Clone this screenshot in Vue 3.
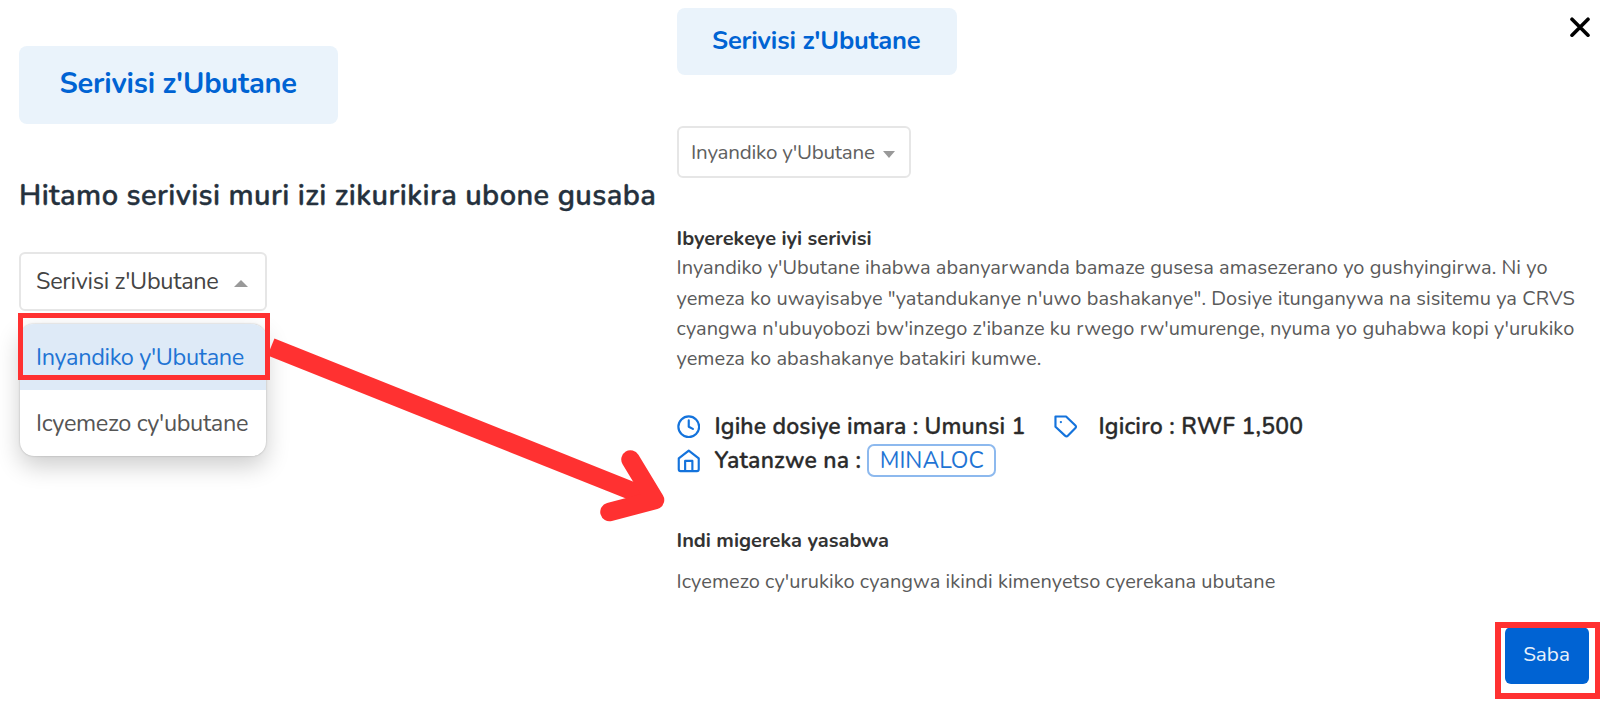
<template>
  <div class="page">
    <section class="left">
      <div class="badge badge-lg">Serivisi z'Ubutane</div>
      <h2 class="heading">Hitamo serivisi muri izi zikurikira ubone gusaba</h2>
      <div class="dropdown">
        <div class="select select-lg">
          <span>Serivisi z'Ubutane</span>
          <i class="caret up"></i>
        </div>
        <ul class="menu">
          <li
              v-for="option in options"
              :key="option"
              class="option"
              :class="{ active: option === selected }"
          >{{ option }}</li>
        </ul>
        <div class="marker marker-option"></div>
      </div>
    </section>

    <section class="right">
      <svg class="close" viewBox="0 0 20 20"><path d="M2 2.2L18 18.2M18 2.2L2 18.2" /></svg>
      <div class="badge badge-sm">Serivisi z'Ubutane</div>
      <div class="select select-sm">
        <span>{{ selected }}</span>
        <i class="caret down"></i>
      </div>
      <h4 class="title">Ibyerekeye iyi serivisi</h4>
      <p class="desc">
        <span v-for="line in lines" :key="line">{{ line }}</span>
      </p>
      <div class="meta">
        <div class="meta-row">
          <svg class="icon" viewBox="0 0 24 24">
            <circle cx="12" cy="12" r="10.6" />
            <path d="M12 5.5V12l4.2 2.2" />
          </svg>
          <span>Igihe dosiye imara : Umunsi 1</span>
          <svg class="icon tag" viewBox="0 0 24 24">
            <path d="M1.5 1.5h10.8l9.6 9.2a1.8 1.8 0 0 1 0 2.6l-7.8 8a1.8 1.8 0 0 1-2.6 0L1.5 12z" />
            <path d="M7 7.2h.1" />
          </svg>
          <span class="price">Igiciro : RWF 1,500</span>
        </div>
        <div class="meta-row">
          <svg class="icon" viewBox="0 0 24 24">
            <path d="M1.8 9.6L12 1.6l10.2 8v11.2a1.8 1.8 0 0 1-1.8 1.8H3.6a1.8 1.8 0 0 1-1.8-1.8z" />
            <path d="M8.3 22.4V12.2h7.4v10.2" />
          </svg>
          <span class="issuer">Yatanzwe na :</span>
          <span class="chip">MINALOC</span>
        </div>
      </div>
      <h4 class="title title-attachments">Indi migereka yasabwa</h4>
      <p class="attachment">Icyemezo cy'urukiko cyangwa ikindi kimenyetso cyerekana ubutane</p>
      <div class="actions">
        <button class="submit">Saba</button>
        <div class="marker marker-submit"></div>
      </div>
    </section>

    <!-- arrow from the chosen option to the detail panel -->
    <svg class="arrow" viewBox="0 0 1600 705">
      <path d="M271 347L652 499" />
      <path class="head" d="M630.5 459.5L655 500L609.5 512" />
    </svg>
  </div>
</template>

<script setup>
import { ref } from 'vue';

const options = ["Inyandiko y'Ubutane", "Icyemezo cy'ubutane"];
const selected = ref(options[0]);

const lines = [
  "Inyandiko y'Ubutane ihabwa abanyarwanda bamaze gusesa amasezerano yo gushyingirwa. Ni yo",
  'yemeza ko uwayisabye "yatandukanye n\'uwo bashakanye". Dosiye itunganywa na sisitemu ya CRVS',
  "cyangwa n'ubuyobozi bw'inzego z'ibanze ku rwego rw'umurenge, nyuma yo guhabwa kopi y'urukiko",
  'yemeza ko abashakanye batakiri kumwe.'
];
</script>

<style>
body {
  background: #fff;
}
</style>

<style scoped>
.page {
  position: relative;
  display: flex;
  width: 1600px;
  height: 705px;
  overflow: hidden;
  background: #fff;
  font-family: Nunito, "Nunito Sans", Lato, sans-serif;
  white-space: nowrap;
}

h2, h4, p, ul {
  margin: 0;
  padding: 0;
}

.left {
  width: 658px;
  box-sizing: border-box;
  padding: 46px 0 0 19px;
}

.right {
  position: relative;
  flex: 1;
  padding: 8px 0 0 18.5px;
}

.badge {
  box-sizing: border-box;
  border-radius: 8px;
  background: #eaf3fb;
  color: #0063d3;
  font-weight: 700;
  letter-spacing: -0.2px;
}

.badge-lg {
  width: 318.5px;
  height: 78px;
  padding: 17.5px 0 0 40.5px;
  font-size: 29px;
  line-height: 40px;
}

.badge-sm {
  width: 280px;
  height: 67px;
  padding: 15px 0 0 35.5px;
  font-size: 25.5px;
  line-height: 36px;
}

.heading {
  margin-top: 51.5px;
  font-size: 29px;
  line-height: 40px;
  font-weight: 600;
  letter-spacing: 0.415px;
  color: #25313d;
  -webkit-text-stroke: 0.4px #25313d;
}

.select {
  display: flex;
  align-items: center;
  justify-content: space-between;
  box-sizing: border-box;
  border: 2px solid #e6e6e6;
  border-radius: 6px;
  background: #fff;
}

.dropdown {
  position: relative;
  margin-top: 36px;
}

.select-lg {
  width: 248px;
  height: 59px;
  padding: 0 17px 0 15px;
  font-size: 23.5px;
  letter-spacing: -0.29px;
  color: #444;
}

.select-sm {
  width: 234px;
  height: 52px;
  margin-top: 51px;
  padding: 0 14px 0 12.5px;
  font-size: 20.6px;
  letter-spacing: -0.22px;
  color: #606060;
}

.caret {
  border: 7px solid transparent;
}

.caret.up {
  margin-top: 5px;
  border-top: 0;
  border-bottom-color: #999;
}

.caret.down {
  margin-top: 4px;
  border-width: 6.5px;
  border-bottom: 0;
  border-top: 7px solid #999;
}

.menu {
  position: absolute;
  top: 72px;
  left: 1px;
  width: 246px;
  overflow: hidden;
  list-style: none;
  border-radius: 14px;
  background: #fff;
  box-shadow: 0 10px 24px rgba(0, 0, 0, 0.2), 0 0 2px rgba(0, 0, 0, 0.25);
}

.option {
  height: 66px;
  padding-left: 16px;
  font-size: 23.5px;
  line-height: 66px;
  letter-spacing: -0.34px;
  color: #555;
}

.option.active {
  background: #deeaf7;
  color: #1f74d4;
}

.marker {
  position: absolute;
  box-sizing: border-box;
  border: 5px solid #ff3131;
}

.marker-option {
  top: 61px;
  left: -1px;
  width: 252px;
  height: 67px;
}

.close {
  position: absolute;
  top: 17px;
  right: 10px;
  width: 20px;
  height: 20px;
  stroke: #000;
  stroke-width: 3.6;
  stroke-linecap: round;
}

.title {
  margin-top: 46px;
  margin-bottom: -0.6px;
  font-size: 20px;
  line-height: 30px;
  font-weight: 700;
  color: #333;
}

.desc {
  font-size: 20px;
  line-height: 30.3px;
  letter-spacing: 0.045px;
  color: #5a5a5a;
}

.desc span {
  display: block;
}

.meta {
  margin-top: 34.6px;
}

.meta-row {
  display: flex;
  align-items: center;
  height: 34.5px;
  font-size: 23px;
  font-weight: 600;
  letter-spacing: 0.15px;
  color: #2b2b2b;
  -webkit-text-stroke: 0.3px #2b2b2b;
}

.icon {
  width: 23.5px;
  height: 23.5px;
  margin-right: 14.5px;
  fill: none;
  stroke: #1473dc;
  stroke-width: 2.2;
  stroke-linecap: round;
  stroke-linejoin: round;
}

.tag {
  margin-left: 29px;
  margin-right: 20.5px;
}

.price {
  letter-spacing: 0.2px;
}

.issuer {
  letter-spacing: 0.22px;
}

.chip {
  box-sizing: border-box;
  width: 129px;
  height: 33px;
  margin-left: 6px;
  padding-left: 10.5px;
  border: 2px solid #8db9ee;
  border-radius: 7px;
  line-height: 30px;
  font-weight: 400;
  letter-spacing: 0;
  color: #1f74d4;
  -webkit-text-stroke: 0;
}

.title-attachments {
  margin-top: 48px;
}

.attachment {
  margin-top: 11.4px;
  font-size: 20px;
  line-height: 30px;
  letter-spacing: 0.035px;
  color: #5a5a5a;
}

.actions {
  position: relative;
  display: flex;
  justify-content: flex-end;
  margin-top: 30px;
  padding-right: 11.5px;
}

.submit {
  width: 84px;
  height: 57px;
  padding: 0 0 3px;
  border: 0;
  border-radius: 6px;
  background: #0063d3;
  color: #e8f1fb;
  font-family: inherit;
  font-size: 20.7px;
}

.marker-submit {
  top: -5px;
  right: -1px;
  width: 106px;
  height: 77px;
  border-width: 6px;
}

.arrow {
  position: absolute;
  inset: 0;
  width: 1600px;
  height: 705px;
  fill: none;
  stroke: #ff3131;
  stroke-width: 18.5;
  pointer-events: none;
}

.head {
  stroke-linecap: round;
  stroke-linejoin: round;
}
</style>
